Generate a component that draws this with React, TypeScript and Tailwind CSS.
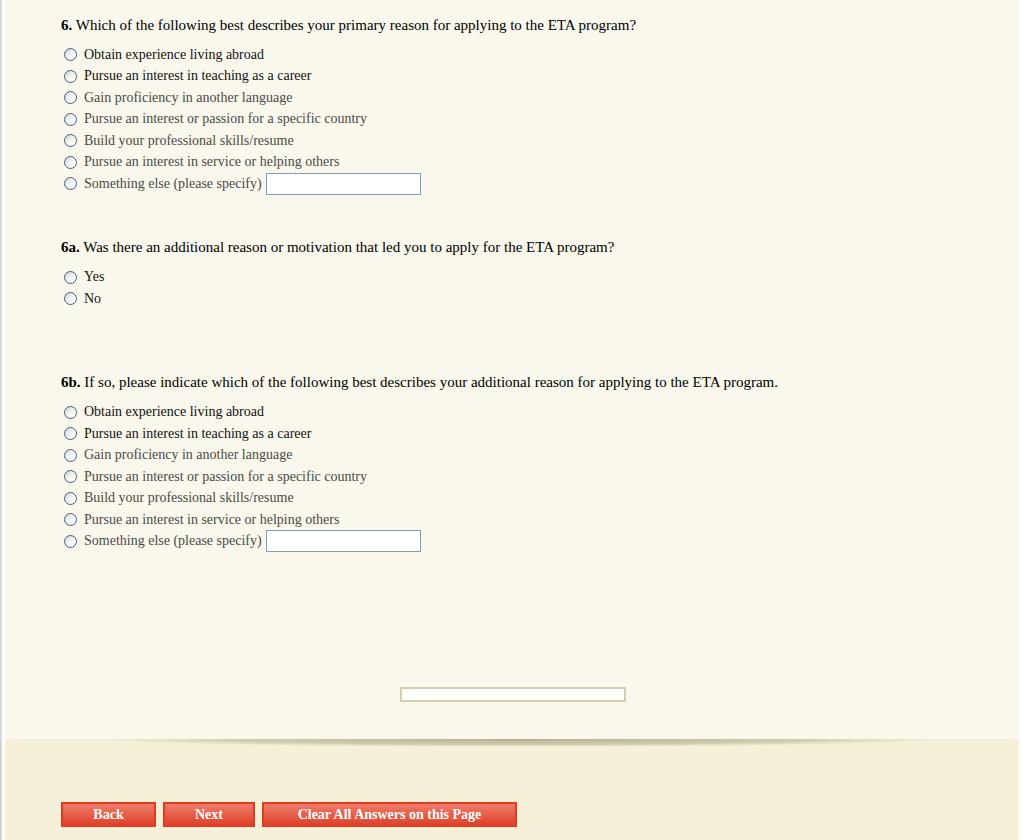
import React from "react";

const serif = { fontFamily: '"Liberation Serif", "Times New Roman", serif' };

type Opt = { label: string; dark?: boolean; input?: boolean };

const reasons: Opt[] = [
  { label: "Obtain experience living abroad", dark: true },
  { label: "Pursue an interest in teaching as a career", dark: true },
  { label: "Gain proficiency in another language" },
  { label: "Pursue an interest or passion for a specific country" },
  { label: "Build your professional skills/resume" },
  { label: "Pursue an interest in service or helping others" },
  { label: "Something else (please specify)", input: true },
];

function Radio() {
  return (
    <span className="inline-block w-[13px] h-[13px] rounded-full border border-[#3d5f86] bg-linear-to-br from-[#d2d2cc] via-[#f4f4f2] to-white shrink-0" />
  );
}

function Option({ o }: { o: Opt }) {
  return (
    <div className="flex items-center h-[21.5px]">
      <div className="w-[23px] flex justify-start pl-[3px]">
        <Radio />
      </div>
      <span className={`text-[14px] leading-none ${o.dark ? "text-[#111]" : "text-[#4a4a4a]"}`}>{o.label}</span>
      {o.input && (
        <span className="ml-[4px] inline-block w-[155px] h-[22px] bg-white border border-[#7f9db9]" />
      )}
    </div>
  );
}

function Question({ num, text }: { num: string; text: string }) {
  return (
    <div className="text-[15px] leading-[20px] text-black">
      <b>{num}</b> {text}
    </div>
  );
}

export default function App() {
  return (
    <div className="flex w-full min-h-[840px] bg-white" style={serif}>
      <div className="w-[2px] bg-[#d6d6d6]" />
      <div className="w-[3px] bg-white" />
      <div className="w-[1014px] flex flex-col">
        <div className="h-[739px] bg-[#faf8ec] pl-[56px] pt-[15px]">
          <Question num="6." text="Which of the following best describes your primary reason for applying to the ETA program?" />
          <div className="mt-[9px]">
            {reasons.map((o) => (
              <Option key={o.label} o={o} />
            ))}
          </div>
          <div className="mt-[42px]">
            <Question num="6a." text="Was there an additional reason or motivation that led you to apply for the ETA program?" />
          </div>
          <div className="mt-[10px]">
            <Option o={{ label: "Yes", dark: true }} />
            <Option o={{ label: "No", dark: true }} />
          </div>
          <div className="mt-[62px]">
            <Question num="6b." text="If so, please indicate which of the following best describes your additional reason for applying to the ETA program." />
          </div>
          <div className="mt-[10px]">
            {reasons.map((o) => (
              <Option key={o.label + "b"} o={o} />
            ))}
          </div>
          <div className="mt-[135px] ml-[339px] w-[226px] h-[15px] border-2 border-[#d4cfae] bg-white" />
        </div>
        <div className="relative flex-1 bg-[#f5f0d7] pl-[56px] pt-[63px]">
          <div className="absolute top-0 left-[95px] w-[840px] h-[8px] bg-[radial-gradient(ellipse_50%_100%_at_50%_0%,rgba(130,120,85,0.55),rgba(130,120,85,0.3)_70%,rgba(130,120,85,0)_100%)]" />
          <div className="flex gap-[7px] text-white font-bold text-[14px]">
            <button className="w-[95px] h-[25px] border-2 border-[#e23b1f] bg-linear-to-b from-[#ee7b69] to-[#de4027] leading-none">Back</button>
            <button className="w-[92px] h-[25px] border-2 border-[#e23b1f] bg-linear-to-b from-[#ee7b69] to-[#de4027] leading-none">Next</button>
            <button className="w-[255px] h-[25px] border-2 border-[#e23b1f] bg-linear-to-b from-[#ee7b69] to-[#de4027] leading-none">Clear All Answers on this Page</button>
          </div>
        </div>
      </div>
      <div className="flex-1 bg-white" />
    </div>
  );
}
